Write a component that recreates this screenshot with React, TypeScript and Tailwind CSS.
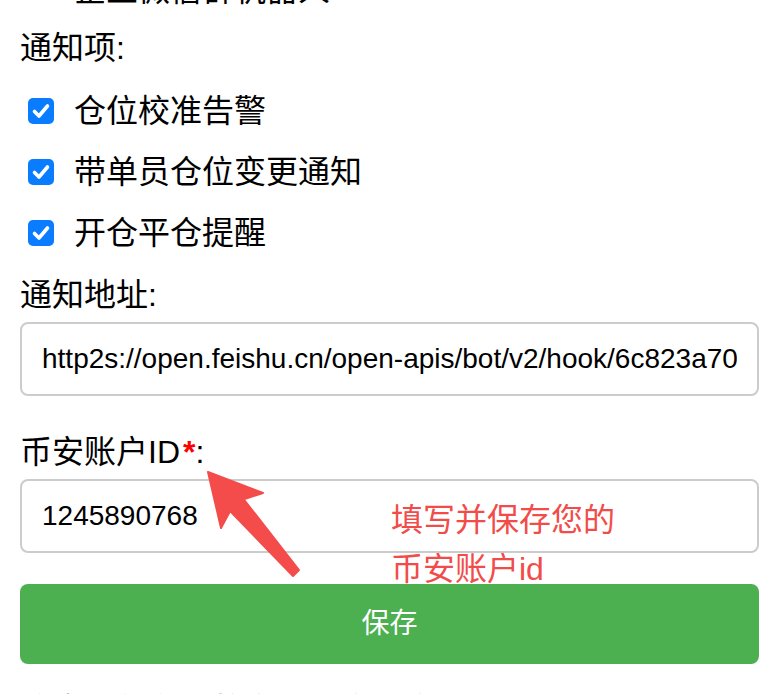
import React from "react";

const FONT = { fontFamily: '"Liberation Sans", "Noto Sans CJK SC", sans-serif' };

function Check({ label, checked }: { label: string; checked: boolean }) {
  return (
    <label className="flex items-center h-[61px] shrink-0">
      <span
        className={
          checked
            ? "ml-2 w-[26px] h-[26px] rounded-[5px] bg-[#0a7cff] flex items-center justify-center"
            : "ml-2 w-[26px] h-[26px] rounded-[5px] border-2 border-[#767676] bg-white self-start"
        }
      >
        {checked && (
          <svg width="20" height="20" viewBox="0 0 20 20">
            <path d="M3.5 10.5 L8 15 L16.5 5" fill="none" stroke="white" strokeWidth="3.6" strokeLinecap="round" strokeLinejoin="round" />
          </svg>
        )}
      </span>
      <span className="ml-[20px] text-[32px] leading-[40px] text-black">{label}</span>
    </label>
  );
}

export default function App() {
  return (
    <div className="relative flex flex-col h-[694px] overflow-hidden bg-white pl-[20px] pr-px" style={FONT}>
      <div className="mt-[-41px] flex flex-col">
        <Check label="企业微信群机器人" checked={false} />
      </div>

      <div className="mt-2 h-[40px] text-[32px] leading-[40px] text-black shrink-0">通知项:</div>

      <div className="mt-3 flex flex-col">
        <Check label="仓位校准告警" checked />
        <Check label="带单员仓位变更通知" checked />
        <Check label="开仓平仓提醒" checked />
      </div>

      <div className="mt-3 h-[40px] text-[32px] leading-[40px] text-black shrink-0">通知地址:</div>
      <input
        readOnly
        value="http2s://open.feishu.cn/open-apis/bot/v2/hook/6c823a70-1f2e-4b5d-9a8c-3e7f2d1b0a94"
        className="mt-[7px] w-full h-[74px] shrink-0 border-2 border-[#cccccc] rounded-[8px] px-[20px] text-[28px] text-black outline-none"
        style={FONT}
      />

      <div className="mt-[36px] h-[40px] text-[32px] leading-[40px] text-black shrink-0">
        币安账户ID<span className="text-[#ff0000] font-bold ml-[3px]">*</span>:
      </div>
      <input
        readOnly
        value="1245890768"
        className="mt-[7px] w-full h-[74px] shrink-0 border-2 border-[#cccccc] rounded-[8px] px-[20px] text-[28px] text-black outline-none"
        style={FONT}
      />

      <button className="mt-[31px] w-full h-[80px] shrink-0 bg-[#4caf50] rounded-[8px] text-white text-[28px]" style={FONT}>
        保存
      </button>

      <div className="mt-[26px] h-[40px] text-[32px] leading-[40px] text-[#333] shrink-0">注意：保存后将自动绑定账户</div>

      <div className="absolute left-[391px] top-[496px] text-[32px] leading-[49px] text-[#f24c4a]">
        <div>填写并保存您的</div>
        <div>币安账户id</div>
      </div>

      <svg className="absolute left-[200px] top-[465px]" width="110" height="115" viewBox="200 465 110 115">
        <polygon
          points="208,472 263,493 243.7,499.3 299,570 293,576 230.1,511.1 221,528"
          fill="#f44c4a"
          stroke="#f44c4a"
          strokeWidth="2"
          strokeLinejoin="round"
        />
      </svg>
    </div>
  );
}
